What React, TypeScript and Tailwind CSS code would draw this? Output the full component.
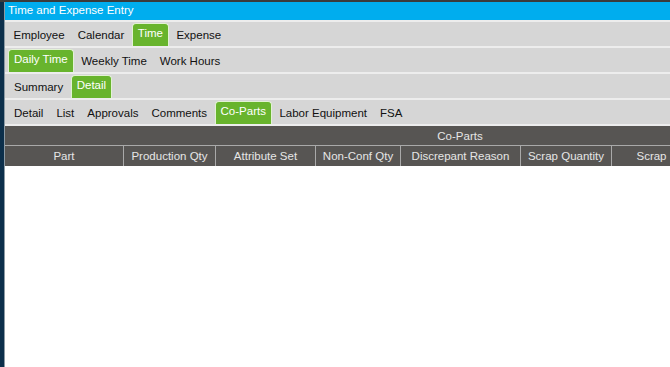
import React from "react";

const font = { fontFamily: '"Liberation Sans", Arial, sans-serif' };

function Plain({ label }: { label: string }) {
  return (
    <div className="flex items-center px-[6.5px] pt-[4px] text-[#111] whitespace-nowrap">{label}</div>
  );
}

function Active({ label }: { label: string }) {
  return (
    <div className="flex items-center mt-[1px] mx-[1px] px-[5px] pb-[2px] rounded-t-[4px] border border-b-0 border-[#e2f2d4] bg-[#68b42d] text-white whitespace-nowrap">
      {label}
    </div>
  );
}

function Row({ children, pl }: { children: React.ReactNode; pl: string }) {
  return <div className={`flex h-[24px] bg-[#d6d6d6] shrink-0 ${pl}`}>{children}</div>;
}

const cols: [string, number][] = [
  ["Part", 119],
  ["Production Qty", 92],
  ["Attribute Set", 100],
  ["Non-Conf Qty", 85],
  ["Discrepant Reason", 120],
  ["Scrap Quantity", 91],
  ["Scrap", 80],
];

export default function App() {
  return (
    <div className="w-[670px] h-[367px] overflow-hidden bg-white text-[11.5px] flex flex-col" style={font}>
      <div className="h-[2px] bg-[#3b3b3b] shrink-0" />
      <div className="flex flex-1 min-h-0">
        <div className="w-[4px] bg-[#0c2f4b] shrink-0" />
        <div className="w-[1px] bg-[#8c9aa4] shrink-0" />
        <div className="flex-1 min-w-0 flex flex-col overflow-hidden">
          <div className="h-[18px] bg-[#00adee] text-white text-[11.5px] flex items-center pl-[3px] shrink-0">
            Time and Expense Entry
          </div>
          <div className="h-[2px] bg-[#ededed] shrink-0" />
          <Row pl="pl-[2px]">
            <Plain label="Employee" />
            <Plain label="Calendar" />
            <Active label="Time" />
            <Plain label="Expense" />
          </Row>
          <div className="h-[2px] bg-[#ededed] shrink-0" />
          <Row pl="pl-[2px]">
            <Active label="Daily Time" />
            <Plain label="Weekly Time" />
            <Plain label="Work Hours" />
          </Row>
          <div className="h-[2px] bg-[#ededed] shrink-0" />
          <Row pl="pl-[2.5px]">
            <Plain label="Summary" />
            <Active label="Detail" />
          </Row>
          <div className="h-[2px] bg-[#ededed] shrink-0" />
          <Row pl="pl-[2.5px]">
            <Plain label="Detail" />
            <Plain label="List" />
            <Plain label="Approvals" />
            <Plain label="Comments" />
            <Active label="Co-Parts" />
            <Plain label="Labor Equipment" />
            <Plain label="FSA" />
          </Row>
          <div className="h-[2px] bg-[#ededed] shrink-0" />
          <div className="w-[910px] shrink-0 bg-[#575553] text-[#e6e6e6]">
            <div className="h-[20px] flex items-center justify-center pt-[2px] border-b border-[#a9a9a9]">Co-Parts</div>
            <div className="h-[20px] flex">
              {cols.map(([label, w]) => (
                <div
                  key={label}
                  className="flex items-center justify-center pt-[1px] border-r border-[#a9a9a9] whitespace-nowrap"
                  style={{ width: w }}
                >
                  {label}
                </div>
              ))}
            </div>
          </div>
          <div className="flex-1 bg-white" />
        </div>
      </div>
    </div>
  );
}
